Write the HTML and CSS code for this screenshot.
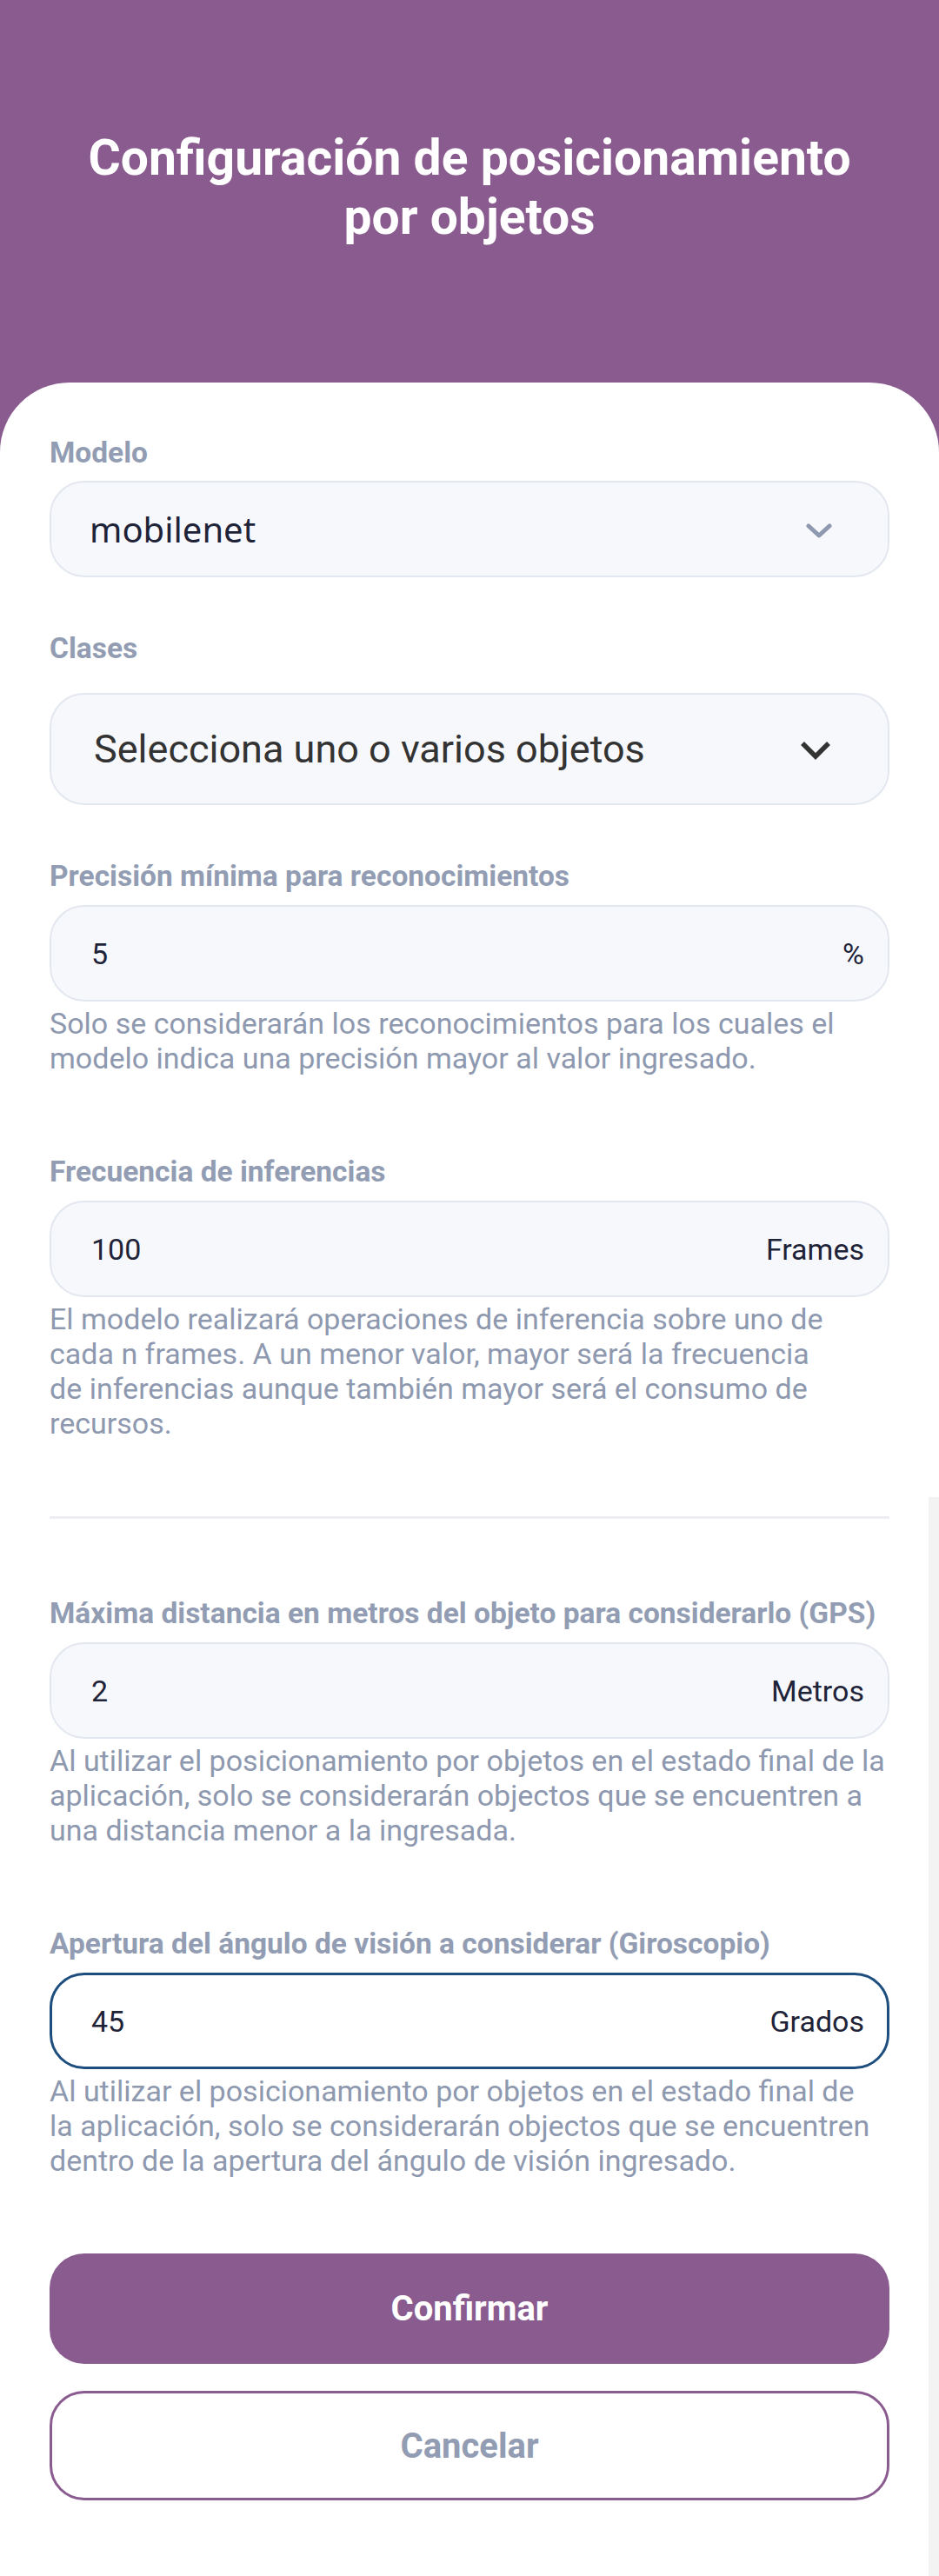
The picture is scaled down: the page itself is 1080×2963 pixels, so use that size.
FILE: index.html
```html
<!DOCTYPE html>
<html lang="es">
<head>
<meta charset="utf-8">
<title>Configuración de posicionamiento por objetos</title>
<link rel="stylesheet" href="styles.css">
</head>
<body>
<div class="page">
  <header class="header">
    <h1 class="title">Configuración de posicionamiento<br>por objetos</h1>
  </header>
  <main class="card">
    <section class="group group-first">
      <div class="label">Modelo</div>
      <div class="field select">
        <span class="select-value">mobilenet</span>
        <svg class="chev chev-grey" width="30" height="18" viewBox="0 0 30 18"><path d="M3 3 L15 14 L27 3" fill="none" stroke="#8e99b0" stroke-width="5" stroke-linecap="round" stroke-linejoin="round"/></svg>
      </div>
    </section>

    <section class="group group-select">
      <div class="label">Clases</div>
      <div class="field multi">
        <span class="multi-value">Selecciona uno o varios objetos</span>
        <svg class="chev chev-dark" width="36" height="24" viewBox="0 0 36 24"><path d="M3 4 L18 19 L33 4" fill="none" stroke="#333333" stroke-width="5.5"/></svg>
      </div>
    </section>

    <section class="group group-select">
      <div class="label">Precisión mínima para reconocimientos</div>
      <div class="field input">
        <span class="value">5</span>
        <span class="unit">%</span>
      </div>
      <p class="help">Solo se considerarán los reconocimientos para los cuales el<br>modelo indica una precisión mayor al valor ingresado.</p>
    </section>

    <section class="group">
      <div class="label">Frecuencia de inferencias</div>
      <div class="field input">
        <span class="value">100</span>
        <span class="unit">Frames</span>
      </div>
      <p class="help">El modelo realizará operaciones de inferencia sobre uno de<br>cada n frames. A un menor valor, mayor será la frecuencia<br>de inferencias aunque también mayor será el consumo de<br>recursos.</p>
    </section>

    <hr class="divider">

    <section class="group">
      <div class="label">Máxima distancia en metros del objeto para considerarlo (GPS)</div>
      <div class="field input">
        <span class="value">2</span>
        <span class="unit">Metros</span>
      </div>
      <p class="help">Al utilizar el posicionamiento por objetos en el estado final de la<br>aplicación, solo se considerarán objectos que se encuentren a<br>una distancia menor a la ingresada.</p>
    </section>

    <section class="group">
      <div class="label">Apertura del ángulo de visión a considerar (Giroscopio)</div>
      <div class="field input focused">
        <span class="value">45</span>
        <span class="unit">Grados</span>
      </div>
      <p class="help">Al utilizar el posicionamiento por objetos en el estado final de<br>la aplicación, solo se considerarán objectos que se encuentren<br>dentro de la apertura del ángulo de visión ingresado.</p>
    </section>

    <div class="actions">
      <button class="btn btn-primary">Confirmar</button>
      <button class="btn btn-outline">Cancelar</button>
    </div>
  </main>
  <div class="scroll-track"></div>
</div>
</body>
</html>
```

FILE: styles.css
```css
* { box-sizing: border-box; }

html, body {
  margin: 0;
  padding: 0;
  background: #ffffff;
}

body {
  font-family: Roboto, "Noto Sans", "Liberation Sans", sans-serif;
  width: 1080px;
  min-height: 2963px;
}

.page {
  position: relative;
  background: #8a5b8f;
  min-height: 2963px;
  display: flex;
  flex-direction: column;
}

.header {
  height: 440px;
  padding-top: 148px;
}

.title {
  margin: 0;
  color: #ffffff;
  font-size: 57px;
  line-height: 68px;
  font-weight: 700;
  text-align: center;
}

.card {
  flex: 1;
  background: #ffffff;
  border-radius: 80px 80px 0 0;
  padding: 61px 57px 60px 57px;
  display: flex;
  flex-direction: column;
}

.group {
  display: flex;
  flex-direction: column;
  margin-top: 91px;
}

.group-first { margin-top: 0; }
.group-select { margin-top: 62px; }

.label {
  color: #929db3;
  font-size: 33.5px;
  line-height: 40px;
  font-weight: 700;
  white-space: nowrap;
  margin-bottom: 12px;
}

.field {
  display: flex;
  align-items: center;
  justify-content: space-between;
  background: #f7f8fc;
  border: 2px solid #e3e7ef;
  border-radius: 40px;
}

.select {
  height: 111px;
  padding: 0 64px 0 44px;
}

.select-value {
  font-family: "Noto Sans", Roboto, sans-serif;
  font-size: 40px;
  color: #1e2338;
}

.multi {
  height: 129px;
  margin-top: 19px;
  padding: 0 65px 0 49px;
}

.multi-value {
  font-size: 45px;
  color: #333333;
}

.chev { display: block; }
.chev-grey { margin-top: 4px; }
.chev-dark { margin-top: 2px; }

.input {
  height: 111px;
  padding: 0 27px 0 46px;
  margin-top: 1px;
}

.input.focused {
  background: #ffffff;
  border: 3px solid #1d4e7e;
  padding-left: 45px;
  padding-right: 26px;
}

.value, .unit {
  font-size: 34px;
  color: #1e2338;
}

.help {
  margin: 5px 0 0 0;
  color: #8e99b0;
  font-size: 34px;
  line-height: 40px;
  white-space: nowrap;
}

.divider {
  margin: 87px 0 0 0;
  border: 0;
  height: 3px;
  background: #eceef3;
}

.divider + .group { margin-top: 89px; }

.actions {
  display: flex;
  flex-direction: column;
  gap: 31px;
  margin-top: 87px;
}

.btn {
  font-family: Roboto, "Noto Sans", sans-serif;
  font-size: 40px;
  font-weight: 700;
  height: 127px;
  border-radius: 40px;
  cursor: pointer;
}

.btn-primary {
  background: #8a5b8f;
  color: #ffffff;
  border: 0;
}

.btn-outline {
  height: 126px;
  background: #ffffff;
  color: #929db3;
  border: 3px solid #8a5b8f;
}

.scroll-track {
  position: absolute;
  right: 0;
  top: 1722px;
  bottom: 0;
  width: 12px;
  background: #f3f3f4;
}
```
